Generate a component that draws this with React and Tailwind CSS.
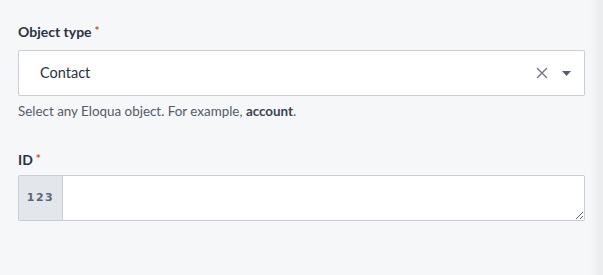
export default function App() {
  return (
    <div className="flex h-[275px] w-[603px] bg-[#f6f7f9]" style={{ fontFamily: 'Lato, "Noto Sans", sans-serif' }}>
      <div className="flex-1 pl-[18px] pr-[5px] pt-[23px]">
        <div className="flex items-start text-[14px] font-bold leading-[18px] text-[#2a3240]">
          <span>Object type</span>
          <span className="ml-[3px] mt-[2px] text-[12px] leading-[12px] text-[#d2472f]">*</span>
        </div>
        <div className="mt-[9px] flex h-[46px] items-center rounded-[2px] border border-[#c9ced6] bg-white pl-[21px] pr-[13px]">
          <span className="flex-1 text-[14.5px] text-[#2a3240]">Contact</span>
          <svg width="12" height="12" viewBox="0 0 12 12" className="mr-[14px]">
            <path d="M1 1 L11 11 M11 1 L1 11" stroke="#6b7482" strokeWidth="1.3" />
          </svg>
          <svg width="9" height="5" viewBox="0 0 9 5">
            <path d="M0 0 H9 L4.5 5 Z" fill="#56606d" />
          </svg>
        </div>
        <div className="mt-[6px] text-[13.4px] leading-[18px] text-[#535c68]">
          Select any Eloqua object. For example, <span className="font-bold text-[#3b4350]">account</span>.
        </div>
        <div className="mt-[31px] flex items-start text-[14px] font-bold leading-[18px] text-[#2a3240]">
          <span>ID</span>
          <span className="ml-[3px] mt-[2px] text-[12px] leading-[12px] text-[#d2472f]">*</span>
        </div>
        <div className="mt-[6px] flex h-[46px] rounded-[2px] border border-[#c9ced6] bg-white">
          <div className="flex w-[44px] items-center justify-center border-r border-[#c9ced6] bg-[#e3e6eb] text-[11px] font-bold tracking-[1.5px] text-[#5d6674]" style={{ fontFamily: '"DejaVu Sans", sans-serif' }}>
            123
          </div>
          <textarea className="flex-1 resize-y bg-white outline-none" />
        </div>
      </div>
      <div className="w-[13px] bg-gradient-to-r from-[#f6f7f9] to-[#e9eaec]" />
    </div>
  );
}
